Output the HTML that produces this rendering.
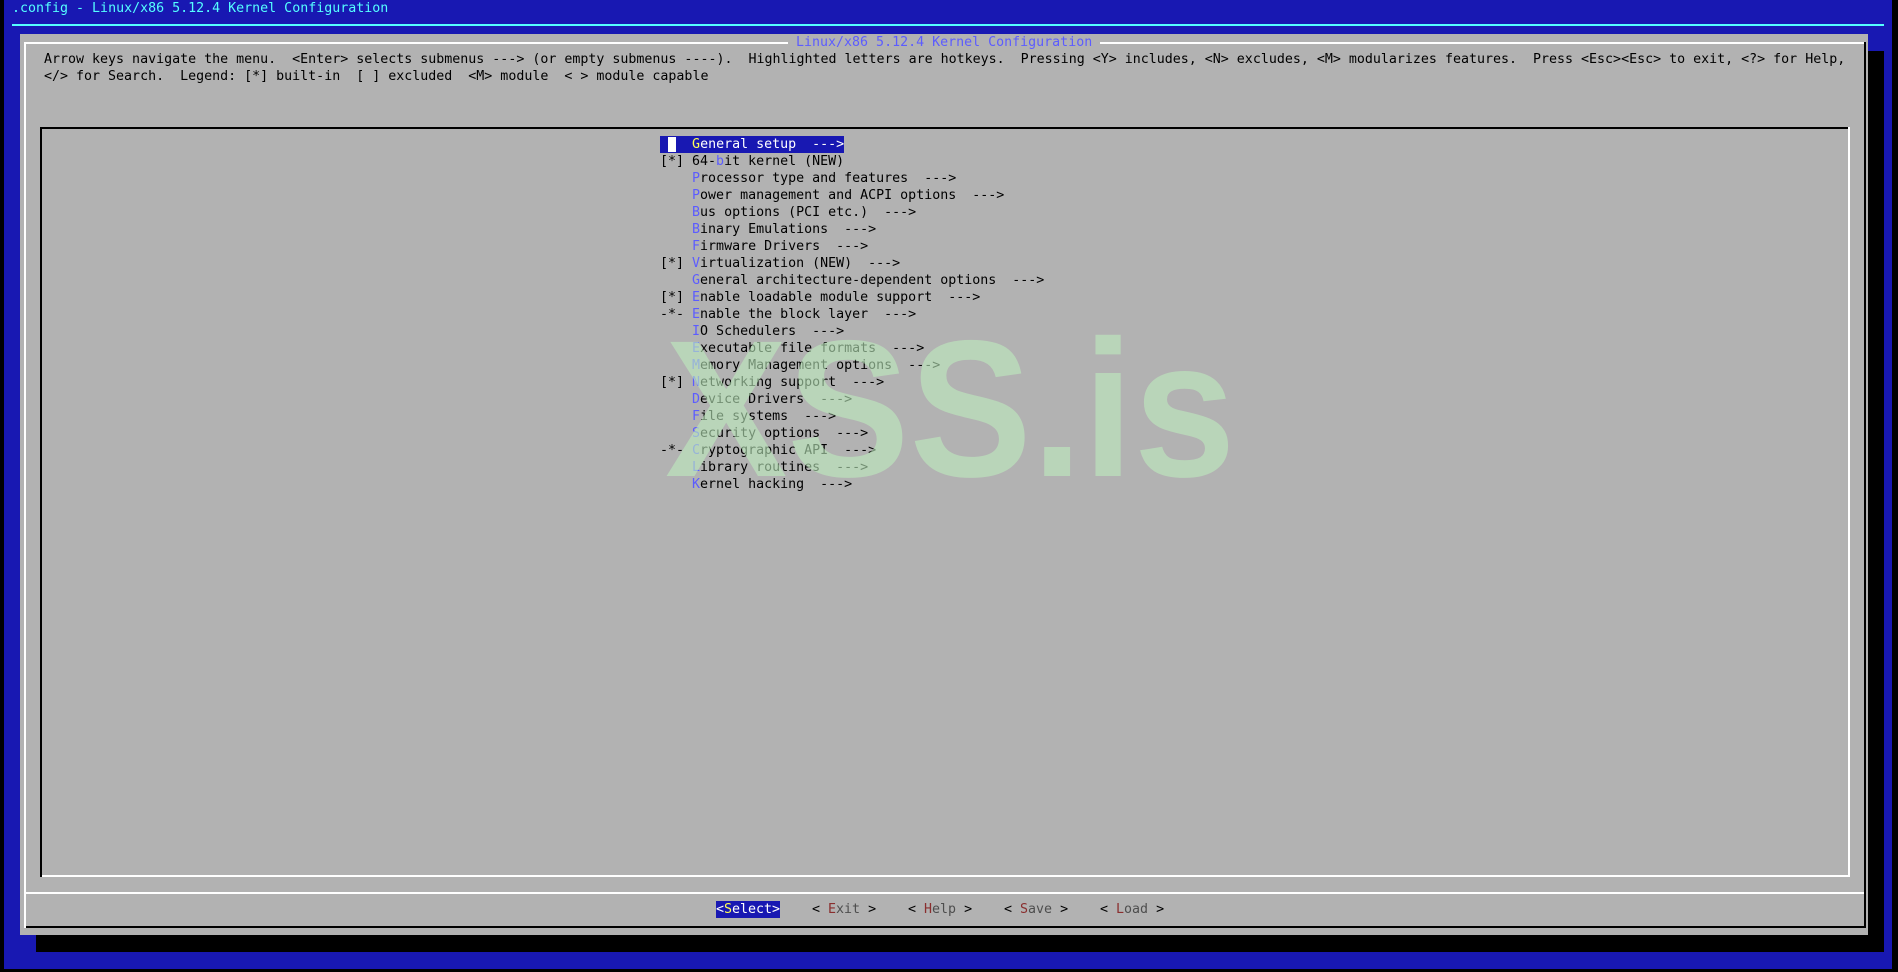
<!DOCTYPE html>
<html><head><meta charset="utf-8"><style>
*{margin:0;padding:0}
body{width:1898px;height:972px;background:#000;position:relative;overflow:hidden;font-family:"DejaVu Sans Mono","Liberation Mono",monospace;font-size:13.3px}
.a{position:absolute}
.t{position:absolute;white-space:pre;height:17px;line-height:17px;color:#000}
.h{color:#5c5cff}
.r{color:#8a2e2e}
.g{color:#4e4e4e}
</style></head><body>
<div class="a" style="left:4px;top:0;width:1888px;height:969px;background:#1818b2"></div>
<div class="t" style="left:12px;top:0;color:#55ffff">.config - Linux/x86 5.12.4 Kernel Configuration</div>
<div class="a" style="left:12px;top:24px;width:1872px;height:2px;background:#55ffff"></div>
<div class="a" style="left:36px;top:51px;width:1848px;height:901px;background:#000"></div>
<div class="a" style="left:20px;top:34px;width:1848px;height:901px;background:#b2b2b2"></div>
<div class="a" style="left:24px;top:42px;width:1840px;height:2px;background:#fff"></div>
<div class="a" style="left:24px;top:42px;width:2px;height:886px;background:#fff"></div>
<div class="a" style="left:1864px;top:42px;width:2px;height:886px;background:#000"></div>
<div class="a" style="left:26px;top:926px;width:1840px;height:2px;background:#000"></div>
<div class="a" style="left:24px;top:892px;width:1840px;height:2px;background:#fff"></div>
<div class="t" style="left:788px;top:34px;background:#b2b2b2;color:#5c5cff"> Linux/x86 5.12.4 Kernel Configuration </div>
<div class="t" style="left:44px;top:51px">Arrow keys navigate the menu.  &lt;Enter&gt; selects submenus ---&gt; (or empty submenus ----).  Highlighted letters are hotkeys.  Pressing &lt;Y&gt; includes, &lt;N&gt; excludes, &lt;M&gt; modularizes features.  Press &lt;Esc&gt;&lt;Esc&gt; to exit, &lt;?&gt; for Help,</div>
<div class="t" style="left:44px;top:68px">&lt;/&gt; for Search.  Legend: [*] built-in  [ ] excluded  &lt;M&gt; module  &lt; &gt; module capable</div>
<div class="a" style="left:40px;top:127px;width:1808px;height:2px;background:#000"></div>
<div class="a" style="left:40px;top:127px;width:2px;height:750px;background:#000"></div>
<div class="a" style="left:1848px;top:127px;width:2px;height:750px;background:#fff"></div>
<div class="a" style="left:42px;top:875px;width:1808px;height:2px;background:#fff"></div>
<div class="t" style="left:660px;top:136px;background:#1818b2;color:#fff;width:184px"> <span style="background:#fff"> </span>  <span style="color:#ffff55">G</span>eneral setup  ---&gt;</div>
<div class="t" style="left:660px;top:153px">[*] 64-<span class="h">b</span>it kernel (NEW)</div>
<div class="t" style="left:660px;top:170px">    <span class="h">P</span>rocessor type and features  ---&gt;</div>
<div class="t" style="left:660px;top:187px">    <span class="h">P</span>ower management and ACPI options  ---&gt;</div>
<div class="t" style="left:660px;top:204px">    <span class="h">B</span>us options (PCI etc.)  ---&gt;</div>
<div class="t" style="left:660px;top:221px">    <span class="h">B</span>inary Emulations  ---&gt;</div>
<div class="t" style="left:660px;top:238px">    <span class="h">F</span>irmware Drivers  ---&gt;</div>
<div class="t" style="left:660px;top:255px">[*] <span class="h">V</span>irtualization (NEW)  ---&gt;</div>
<div class="t" style="left:660px;top:272px">    <span class="h">G</span>eneral architecture-dependent options  ---&gt;</div>
<div class="t" style="left:660px;top:289px">[*] <span class="h">E</span>nable loadable module support  ---&gt;</div>
<div class="t" style="left:660px;top:306px">-*- <span class="h">E</span>nable the block layer  ---&gt;</div>
<div class="t" style="left:660px;top:323px">    <span class="h">I</span>O Schedulers  ---&gt;</div>
<div class="t" style="left:660px;top:340px">    <span class="h">E</span>xecutable file formats  ---&gt;</div>
<div class="t" style="left:660px;top:357px">    <span class="h">M</span>emory Management options  ---&gt;</div>
<div class="t" style="left:660px;top:374px">[*] <span class="h">N</span>etworking support  ---&gt;</div>
<div class="t" style="left:660px;top:391px">    <span class="h">D</span>evice Drivers  ---&gt;</div>
<div class="t" style="left:660px;top:408px">    <span class="h">F</span>ile systems  ---&gt;</div>
<div class="t" style="left:660px;top:425px">    <span class="h">S</span>ecurity options  ---&gt;</div>
<div class="t" style="left:660px;top:442px">-*- <span class="h">C</span>ryptographic API  ---&gt;</div>
<div class="t" style="left:660px;top:459px">    <span class="h">L</span>ibrary routines  ---&gt;</div>
<div class="t" style="left:660px;top:476px">    <span class="h">K</span>ernel hacking  ---&gt;</div>
<div class="a" style="left:665px;top:312px;font-family:'Liberation Sans',Arial,sans-serif;font-weight:bold;font-size:195px;line-height:195px;color:rgba(190,236,190,0.6);white-space:pre;transform:scaleX(0.94);transform-origin:0 0">XSS.is</div>
<div class="t" style="left:716px;top:901px;background:#1818b2;color:#fff">&lt;<span style="color:#ffff55">S</span>elect&gt;</div>
<div class="t" style="left:812px;top:901px">&lt; <span class="r">E</span><span class="g">xit</span> &gt;</div>
<div class="t" style="left:908px;top:901px">&lt; <span class="r">H</span><span class="g">elp</span> &gt;</div>
<div class="t" style="left:1004px;top:901px">&lt; <span class="r">S</span><span class="g">ave</span> &gt;</div>
<div class="t" style="left:1100px;top:901px">&lt; <span class="r">L</span><span class="g">oad</span> &gt;</div>
</body></html>
